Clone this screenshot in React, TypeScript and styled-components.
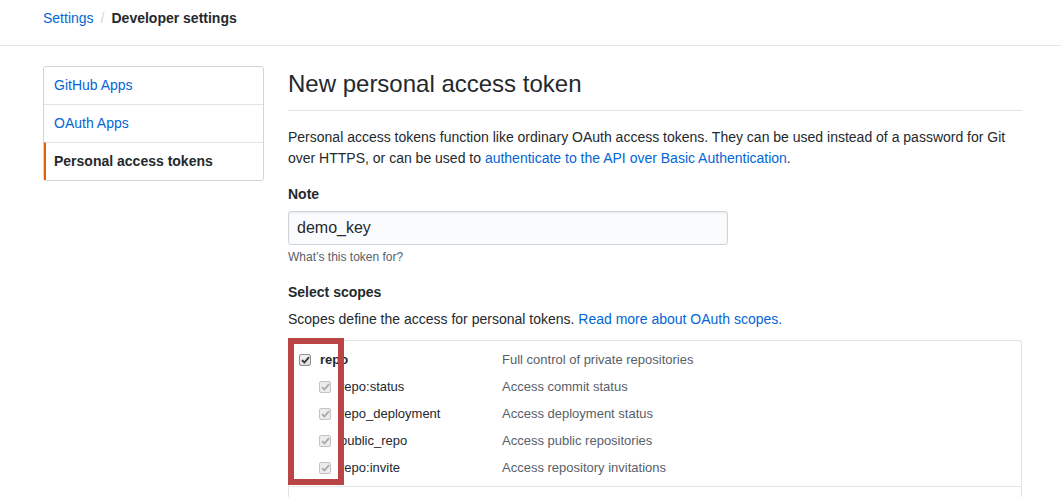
import styled, { createGlobalStyle } from 'styled-components';

const GlobalStyle = createGlobalStyle`
  html, body {
    margin: 0;
    padding: 0;
    overflow: hidden;
    background: #fff;
  }
  body {
    font-family: "Liberation Sans", Arial, sans-serif;
    font-size: 14px;
    line-height: 1.5;
    color: #24292e;
  }
  a {
    color: #0366d6;
    text-decoration: none;
  }
`;

const Header = styled.div`
  border-bottom: 1px solid #e1e4e8;
  padding: 8px 0 16px 43px;
  height: 21px;
`;

const Crumbs = styled.nav`
  display: flex;
  align-items: center;
  line-height: 21px;
`;

const Sep = styled.span`
  color: #d1d5da;
  padding: 0 7px 0 7px;
`;

const Current = styled.span`
  font-weight: bold;
`;

const Layout = styled.div`
  display: flex;
  gap: 24px;
  margin: 20px 39px 0 43px;
`;

const Menu = styled.nav`
  width: 219px;
  flex: none;
  align-self: flex-start;
  border: 1px solid #d1d5da;
  border-radius: 3px;
`;

const MenuItem = styled.a<{ $active?: boolean }>`
  display: block;
  padding: 8px 10px 8px ${p => (p.$active ? '8px' : '10px')};
  line-height: 21px;
  border-top: 1px solid #e1e4e8;
  border-left: ${p => (p.$active ? '2px solid #e36209' : 'none')};
  color: ${p => (p.$active ? '#24292e' : '#0366d6')};
  font-weight: ${p => (p.$active ? 'bold' : 'normal')};
  &:first-child {
    border-top: none;
  }
`;

const Main = styled.div`
  flex: 1;
  min-width: 0;
`;

const Subhead = styled.div`
  border-bottom: 1px solid #e1e4e8;
  padding-bottom: 8px;
`;

const Title = styled.h2`
  margin: 0;
  font-size: 24px;
  font-weight: normal;
  line-height: 36px;
`;

const Lead = styled.p`
  margin: 16px 0 0;
  line-height: 21px;
`;

const Label = styled.div<{ $gap: number }>`
  margin-top: ${p => p.$gap}px;
  font-weight: bold;
  line-height: 21px;
`;

const TextField = styled.input`
  display: block;
  box-sizing: border-box;
  margin-top: 6px;
  width: 440px;
  height: 34px;
  padding: 6px 8px;
  font-family: inherit;
  font-size: 16px;
  color: #24292e;
  background: #fafbfc;
  border: 1px solid #d1d5da;
  border-radius: 3px;
  box-shadow: inset 0 1px 2px rgba(27, 31, 35, 0.075);
  outline: none;
`;

const Hint = styled.p`
  margin: 3px 0 0;
  font-size: 12px;
  line-height: 18px;
  color: #586069;
`;

const Desc = styled.p`
  margin: 6px 0 0;
  line-height: 21px;
`;

const ScopesBox = styled.div`
  position: relative;
  margin-top: 10px;
  height: 160px;
  border: 1px solid #e1e4e8;
  border-bottom: none;
  border-radius: 3px 3px 0 0;
`;

const Group = styled.ul`
  list-style: none;
  margin: 0;
  padding: 5px 0 5px;
  border-bottom: 1px solid #e1e4e8;
`;

const ScopeRow = styled.li`
  display: grid;
  grid-template-columns: 203px 1fr;
  align-items: center;
  height: 27px;
  padding-left: 10px;
  font-size: 13px;
`;

const ScopeName = styled.span<{ $sub?: boolean }>`
  display: flex;
  align-items: center;
  gap: 9px;
  padding-left: ${p => (p.$sub ? '20px' : '0')};
  font-weight: ${p => (p.$sub ? 'normal' : 'bold')};
  color: #24292e;
`;

const ScopeDesc = styled.span`
  color: #586069;
`;

const Box = styled.span<{ $disabled?: boolean }>`
  box-sizing: border-box;
  display: inline-flex;
  align-items: center;
  justify-content: center;
  width: 12px;
  height: 12px;
  border-radius: 2px;
  border: 1px solid ${p => (p.$disabled ? '#c4c4c4' : '#8f8f8f')};
  background: ${p => (p.$disabled ? '#ececec' : 'linear-gradient(#f4f4f4, #dcdcdc)')};
  color: ${p => (p.$disabled ? '#a9a9a9' : '#333')};
  flex: none;
`;

const Highlight = styled.div`
  position: absolute;
  left: -1px;
  top: -3px;
  width: 56px;
  height: 147px;
  box-sizing: border-box;
  border: 6px solid #ba4446;
  pointer-events: none;
`;

function Check({ disabled }: { disabled?: boolean }) {
  return (
    <Box $disabled={disabled}>
      <svg width="9" height="8" viewBox="0 0 9 8">
        <path d="M1 4.2 L3.4 6.5 L8 1.2" fill="none" stroke="currentColor" strokeWidth="1.8" />
      </svg>
    </Box>
  );
}

const subScopes = [
  ['repo:status', 'Access commit status'],
  ['repo_deployment', 'Access deployment status'],
  ['public_repo', 'Access public repositories'],
  ['repo:invite', 'Access repository invitations'],
];

export default function App() {
  return (
    <>
      <GlobalStyle />
      <Header>
        <Crumbs>
          <a href="#">Settings</a>
          <Sep>/</Sep>
          <Current>Developer settings</Current>
        </Crumbs>
      </Header>
      <Layout>
        <Menu>
          <MenuItem href="#">GitHub Apps</MenuItem>
          <MenuItem href="#">OAuth Apps</MenuItem>
          <MenuItem $active>Personal access tokens</MenuItem>
        </Menu>
        <Main>
          <Subhead>
            <Title>New personal access token</Title>
          </Subhead>
          <Lead>
            Personal access tokens function like ordinary OAuth access tokens. They can be used instead of a
            password for Git over HTTPS, or can be used to{' '}
            <a href="#">authenticate to the API over Basic Authentication</a>.
          </Lead>
          <Label $gap={15}>Note</Label>
          <TextField defaultValue="demo_key" />
          <Hint>What’s this token for?</Hint>
          <Label $gap={16}>Select scopes</Label>
          <Desc>
            Scopes define the access for personal tokens. <a href="#">Read more about OAuth scopes.</a>
          </Desc>
          <ScopesBox>
            <Group>
              <ScopeRow>
                <ScopeName>
                  <Check />
                  repo
                </ScopeName>
                <ScopeDesc>Full control of private repositories</ScopeDesc>
              </ScopeRow>
              {subScopes.map(([name, desc]) => (
                <ScopeRow key={name}>
                  <ScopeName $sub>
                    <Check disabled />
                    {name}
                  </ScopeName>
                  <ScopeDesc>{desc}</ScopeDesc>
                </ScopeRow>
              ))}
            </Group>
            <Highlight />
          </ScopesBox>
        </Main>
      </Layout>
    </>
  );
}
